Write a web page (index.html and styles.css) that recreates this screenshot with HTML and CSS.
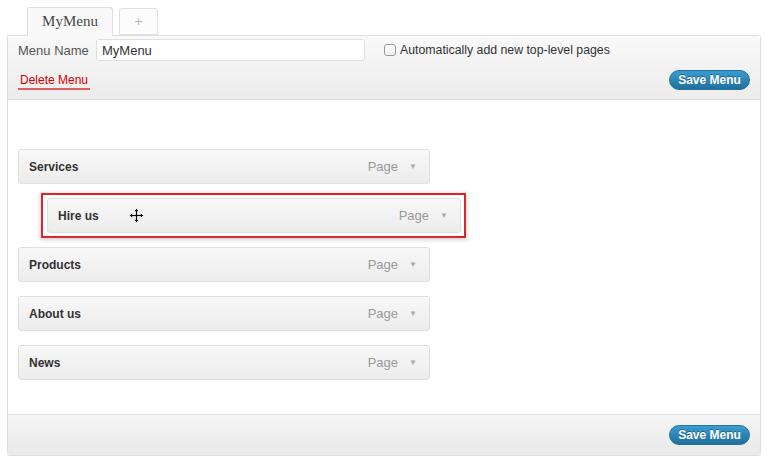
FILE: index.html
```html
<!DOCTYPE html>
<html lang="en">
<head>
    <meta charset="UTF-8">
    <title>Menus</title>
    <link rel="stylesheet" href="styles.css">
</head>
<body>
    <div class="page">
        <div class="tabs">
            <div class="tab tab-active">MyMenu</div>
            <div class="tab tab-add">+</div>
        </div>

        <div class="menu-panel">
            <div class="menu-header">
                <div class="header-row">
                    <label class="name-label" for="menuName">Menu Name</label>
                    <input class="name-input" type="text" id="menuName" value="MyMenu">
                    <label class="auto-add"><span class="checkbox"></span>Automatically add new top-level pages</label>
                </div>
                <div class="header-row header-actions">
                    <a class="delete-link" href="#">Delete Menu</a>
                    <button class="save-btn">Save Menu</button>
                </div>
            </div>

            <div class="menu-body">
                <div class="menu-item">
                    <span class="item-title">Services</span>
                    <span class="item-type">Page</span>
                    <span class="item-arrow">&#9660;</span>
                </div>
                <div class="menu-item sub-item dragging">
                    <span class="item-title">Hire us</span>
                    <svg class="move-cursor" width="15" height="15" viewBox="0 0 15 15">
                        <path d="M7.5 0.5 L10.5 3.5 L8.5 3.5 L8.5 6.5 L11.5 6.5 L11.5 4.5 L14.5 7.5 L11.5 10.5 L11.5 8.5 L8.5 8.5 L8.5 11.5 L10.5 11.5 L7.5 14.5 L4.5 11.5 L6.5 11.5 L6.5 8.5 L3.5 8.5 L3.5 10.5 L0.5 7.5 L3.5 4.5 L3.5 6.5 L6.5 6.5 L6.5 3.5 L4.5 3.5 Z" fill="#000" stroke="#fff" stroke-width="0.8"/>
                    </svg>
                    <span class="item-type">Page</span>
                    <span class="item-arrow">&#9660;</span>
                </div>
                <div class="menu-item">
                    <span class="item-title">Products</span>
                    <span class="item-type">Page</span>
                    <span class="item-arrow">&#9660;</span>
                </div>
                <div class="menu-item">
                    <span class="item-title">About us</span>
                    <span class="item-type">Page</span>
                    <span class="item-arrow">&#9660;</span>
                </div>
                <div class="menu-item">
                    <span class="item-title">News</span>
                    <span class="item-type">Page</span>
                    <span class="item-arrow">&#9660;</span>
                </div>
            </div>

            <div class="menu-footer">
                <button class="save-btn">Save Menu</button>
            </div>
        </div>
    </div>
</body>
</html>
```

FILE: styles.css
```css
body {
    margin: 0;
    font-family: "Liberation Sans", Arial, sans-serif;
    background: #fff;
}
.page {
    padding: 7px 6px 0 7px;
    width: 754px;
}
.tabs {
    display: flex;
    margin-left: 20px;
    gap: 6px;
    align-items: flex-end;
}
.tab {
    font-family: "Liberation Serif", Georgia, serif;
    border: 1px solid #dfdfdf;
    border-bottom: none;
    border-radius: 3px 3px 0 0;
    text-align: center;
    color: #999;
}
.tab-active {
    width: 84px;
    height: 28px;
    line-height: 27px;
    font-size: 15px;
    color: #464646;
    background: #f9f9f9;
    margin-bottom: -1px;
    position: relative;
    z-index: 1;
}
.tab-add {
    width: 37px;
    height: 25px;
    line-height: 24px;
    font-size: 15px;
    background: #fcfcfc;
    border-bottom: 1px solid #dfdfdf;
    color: #aaa;
}
.menu-panel {
    border: 1px solid #dfdfdf;
    border-radius: 0 3px 3px 3px;
    background: #fff;
    box-shadow: 0 1px 1px rgba(0, 0, 0, 0.04);
}
.menu-header {
    background: linear-gradient(#f9f9f9, #ececec);
    border-bottom: 1px solid #dfdfdf;
    padding: 3px 11px 9px 10px;
}
.header-row {
    display: flex;
    align-items: center;
}
.name-label {
    font-size: 13px;
    color: #555;
    width: 78px;
}
.name-input {
    width: 269px;
    height: 22px;
    box-sizing: border-box;
    border: 1px solid #dfdfdf;
    border-radius: 3px;
    padding: 0 5px;
    font-family: "Liberation Sans", Arial, sans-serif;
    font-size: 13px;
    color: #333;
    background: #fff;
}
.auto-add {
    display: flex;
    align-items: center;
    margin-left: 19px;
    font-size: 12.3px;
    color: #333;
}
.checkbox {
    width: 10px;
    height: 10px;
    border: 1px solid #999;
    border-radius: 3px;
    background: linear-gradient(#fff, #eee);
    margin-right: 4px;
}
.header-actions {
    justify-content: space-between;
    margin-top: 9px;
    height: 20px;
}
.delete-link {
    color: #d40000;
    font-size: 12px;
    text-decoration: none;
    border-bottom: 2px solid #e06060;
    padding: 0 2px 1px 2px;
    margin-top: 2px;
}
.save-btn {
    width: 81px;
    height: 20px;
    border: 1px solid #21759b;
    border-radius: 11px;
    background: linear-gradient(#3c9cd0, #1f6f9e);
    color: #fff;
    font-family: "Liberation Sans", Arial, sans-serif;
    font-size: 12px;
    font-weight: bold;
    text-shadow: 0 -1px 0 rgba(0, 0, 0, 0.3);
    padding: 0;
    margin-right: -1px;
}
.menu-body {
    padding: 49px 10px 34px 10px;
}
.menu-item {
    display: flex;
    align-items: center;
    width: 412px;
    height: 35px;
    box-sizing: border-box;
    border: 1px solid #dfdfdf;
    border-radius: 3px;
    background: linear-gradient(#f8f8f8, #ececec);
    padding: 0 12px 0 10px;
    margin-bottom: 14px;
}
.menu-item:last-child {
    margin-bottom: 0;
}
.sub-item {
    margin-left: 29px;
    width: 414px;
}
.dragging {
    position: relative;
}
.dragging::before {
    content: "";
    position: absolute;
    top: -6px;
    bottom: -6px;
    left: -7px;
    right: -6px;
    border: 2px solid #d9252d;
    box-shadow: 0 1px 4px 1px rgba(0, 0, 0, 0.18);
}
.item-title {
    font-size: 12px;
    font-weight: bold;
    color: #333;
    flex: 1;
}
.sub-item .item-title {
    flex: 0 0 auto;
}
.move-cursor {
    margin-left: 30px;
    flex: 0 0 auto;
    margin-right: auto;
}
.item-type {
    font-size: 13px;
    color: #999;
}
.item-arrow {
    font-size: 8px;
    color: #aaa;
    margin-left: 11px;
}
.menu-footer {
    display: flex;
    justify-content: flex-end;
    align-items: center;
    height: 40px;
    border-top: 1px solid #dfdfdf;
    background: linear-gradient(#f5f5f5, #e9e9e9);
    padding-right: 11px;
}
```
